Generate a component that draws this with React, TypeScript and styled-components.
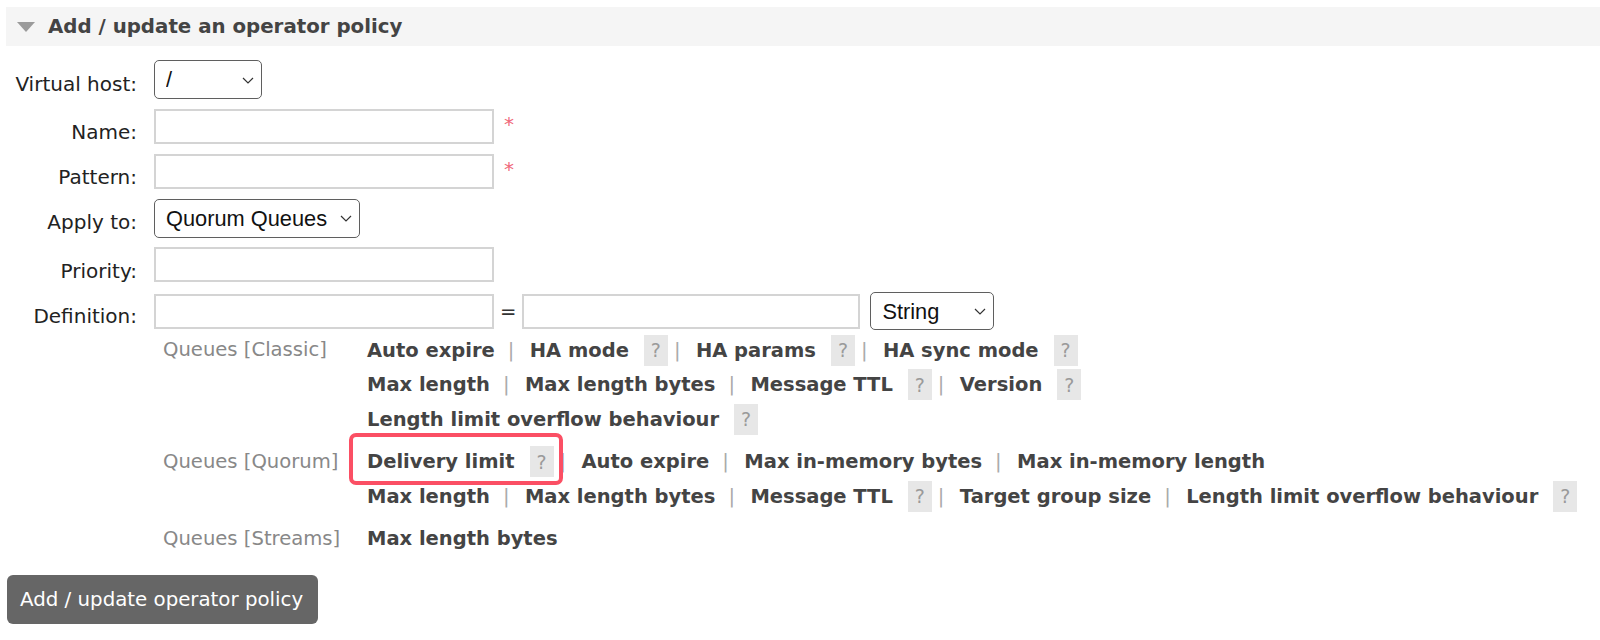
import React from 'react';
import styled, { createGlobalStyle } from 'styled-components';

const GlobalStyle = createGlobalStyle`
    body {
        margin: 0;
        background: #fff;
        font-family: 'DejaVu Sans', Verdana, sans-serif;
        font-size: 19.6px;
        color: #222;
    }
`;

const Page = styled.div`
    padding: 7px 0 0 6px;
`;

const SectionHeader = styled.div`
    display: flex;
    align-items: center;
    height: 39px;
    background: #f5f5f5;
`;

const Toggle = styled.svg`
    width: 18px;
    height: 10px;
    margin: 1px 13px 0 11px;
`;

const SectionTitle = styled.h2`
    margin: 0;
    font-size: 19.8px;
    font-weight: bold;
    color: #444;
`;

const Form = styled.div`
    display: grid;
    grid-template-columns: 131px 1fr;
    column-gap: 17px;
    row-gap: 9.5px;
    margin-top: 14px;
`;

const Label = styled.label`
    align-self: start;
    padding-top: 11.5px;
    line-height: 24px;
    font-size: 20px;
    text-align: right;
    white-space: nowrap;
`;

const Field = styled.div`
    display: flex;
    align-items: center;
`;

const FieldColumn = styled.div`
    display: flex;
    flex-direction: column;
`;

const TextInput = styled.input<{ $width?: number }>`
    box-sizing: border-box;
    width: ${({ $width }) => $width ?? 340}px;
    height: 35px;
    border: 2px solid #d4d4d4;
    border-radius: 0;
    padding: 0 6px;
    font: inherit;
    outline: none;
`;

const Required = styled.span`
    margin-left: 10px;
    margin-top: -4px;
    color: #f0687a;
    font-size: 20px;
`;

const Equals = styled.span`
    margin: 0 6px 0 6px;
    color: #333;
`;

const SelectWrap = styled.div<{ $width: number; $height?: number; $gap?: number }>`
    position: relative;
    width: ${({ $width }) => $width}px;
    height: ${({ $height }) => $height ?? 39}px;
    margin-left: ${({ $gap }) => $gap ?? 0}px;
`;

const NativeSelect = styled.select`
    appearance: none;
    box-sizing: border-box;
    width: 100%;
    height: 100%;
    padding: 0 0 0 11px;
    border: 1.5px solid #5f5f5f;
    border-radius: 5px;
    background: #fff;
    color: #111;
    font-family: 'Liberation Sans', Arial, sans-serif;
    font-size: 21.8px;
    outline: none;
`;

const Chevron = styled.svg`
    position: absolute;
    right: 8px;
    top: 50%;
    width: 12px;
    height: 7px;
    margin-top: -3px;
    pointer-events: none;
`;

const HelpBlock = styled.div`
    margin: 3px 0 0 9px;
    display: flex;
    flex-direction: column;
    gap: 8px;
`;

const HelpGroup = styled.div`
    display: grid;
    grid-template-columns: 194px 1fr;
    column-gap: 10px;
`;

const GroupName = styled.div`
    line-height: 34.5px;
    color: #888;
    white-space: nowrap;
`;

const GroupRows = styled.div`
    display: flex;
    flex-direction: column;
`;

const ArgRow = styled.div`
    display: flex;
    align-items: center;
    height: 34.5px;
    white-space: nowrap;
`;

const ArgLink = styled.span<{ $last: boolean }>`
    font-weight: bold;
    font-size: 19.5px;
    color: #444;
    padding-right: ${({ $last }) => ($last ? 0 : 13)}px;
`;

const HelpMark = styled.span<{ $last: boolean }>`
    display: inline-flex;
    align-items: center;
    justify-content: center;
    width: 24px;
    height: 31px;
    margin-left: 2px;
    margin-right: ${({ $last }) => ($last ? 0 : 6)}px;
    background: #e7e7e7;
    color: #9a9a9a;
    font-size: 19px;
`;

const Sep = styled.span`
    width: 6px;
    margin-right: 16px;
    text-align: center;
    color: #aaa;
`;

const Highlight = styled.span`
    position: relative;
    display: flex;
    align-items: center;
    align-self: stretch;

    &::after {
        content: '';
        position: absolute;
        left: -18px;
        right: -3px;
        top: -11.5px;
        bottom: -6px;
        border: 4px solid #fb4f64;
        border-radius: 7px;
        z-index: 1;
    }
`;

const SubmitButton = styled.button`
    margin: 19px 0 0 1px;
    height: 49px;
    padding: 0 15px 0 13px;
    border: none;
    border-radius: 6px;
    background: #666;
    color: #fff;
    font: inherit;
    font-size: 19.8px;
    cursor: pointer;
`;

type Arg = { name: string; help?: boolean; marked?: boolean };

const argGroups: { title: string; rows: Arg[][] }[] = [
    {
        title: 'Queues [Classic]',
        rows: [
            [
                { name: 'Auto expire' },
                { name: 'HA mode', help: true },
                { name: 'HA params', help: true },
                { name: 'HA sync mode', help: true },
            ],
            [
                { name: 'Max length' },
                { name: 'Max length bytes' },
                { name: 'Message TTL', help: true },
                { name: 'Version', help: true },
            ],
            [{ name: 'Length limit overflow behaviour', help: true }],
        ],
    },
    {
        title: 'Queues [Quorum]',
        rows: [
            [
                { name: 'Delivery limit', help: true, marked: true },
                { name: 'Auto expire' },
                { name: 'Max in-memory bytes' },
                { name: 'Max in-memory length' },
            ],
            [
                { name: 'Max length' },
                { name: 'Max length bytes' },
                { name: 'Message TTL', help: true },
                { name: 'Target group size' },
                { name: 'Length limit overflow behaviour', help: true },
            ],
        ],
    },
    {
        title: 'Queues [Streams]',
        rows: [[{ name: 'Max length bytes' }]],
    },
];

const Select = ({
    value,
    options,
    width,
    height,
    gap,
}: {
    value: string;
    options: string[];
    width: number;
    height?: number;
    gap?: number;
}) => (
    <SelectWrap $width={width} $height={height} $gap={gap}>
        <NativeSelect defaultValue={value}>
            {options.map(o => (
                <option key={o}>{o}</option>
            ))}
        </NativeSelect>
        <Chevron viewBox="0 0 12 7">
            <path d="M1 1 L6 6 L11 1" fill="none" stroke="#333" strokeWidth="1.2" />
        </Chevron>
    </SelectWrap>
);

const ArgItem = ({ arg, last }: { arg: Arg; last: boolean }) => {
    const body = (
        <>
            <ArgLink $last={last && !arg.help}>{arg.name}</ArgLink>
            {arg.help && <HelpMark $last={last}>?</HelpMark>}
        </>
    );
    return arg.marked ? <Highlight>{body}</Highlight> : body;
};

export default function App() {
    return (
        <Page>
            <GlobalStyle />
            <SectionHeader>
                <Toggle viewBox="0 0 18 10">
                    <polygon points="0,0 18,0 9,10" fill="#9b9b9b" />
                </Toggle>
                <SectionTitle>Add / update an operator policy</SectionTitle>
            </SectionHeader>

            <Form>
                <Label>Virtual host:</Label>
                <Field>
                    <Select value="/" options={['/']} width={108} />
                </Field>

                <Label>Name:</Label>
                <Field>
                    <TextInput type="text" />
                    <Required>*</Required>
                </Field>

                <Label>Pattern:</Label>
                <Field>
                    <TextInput type="text" />
                    <Required>*</Required>
                </Field>

                <Label>Apply to:</Label>
                <Field>
                    <Select
                        value="Quorum Queues"
                        options={['Queues and Exchanges', 'Classic Queues', 'Quorum Queues', 'Streams']}
                        width={206}
                    />
                </Field>

                <Label>Priority:</Label>
                <Field>
                    <TextInput type="text" />
                </Field>

                <Label>Definition:</Label>
                <FieldColumn>
                    <Field>
                        <TextInput type="text" />
                        <Equals>=</Equals>
                        <TextInput type="text" $width={338} />
                        <Select
                            value="String"
                            options={['String', 'Number', 'List']}
                            width={124}
                            height={38}
                            gap={10}
                        />
                    </Field>
                    <HelpBlock>
                        {argGroups.map(group => (
                            <HelpGroup key={group.title}>
                                <GroupName>{group.title}</GroupName>
                                <GroupRows>
                                    {group.rows.map((row, i) => (
                                        <ArgRow key={i}>
                                            {row.map((arg, j) => (
                                                <React.Fragment key={arg.name}>
                                                    <ArgItem arg={arg} last={j === row.length - 1} />
                                                    {j < row.length - 1 && <Sep>|</Sep>}
                                                </React.Fragment>
                                            ))}
                                        </ArgRow>
                                    ))}
                                </GroupRows>
                            </HelpGroup>
                        ))}
                    </HelpBlock>
                </FieldColumn>
            </Form>

            <SubmitButton>Add / update operator policy</SubmitButton>
        </Page>
    );
}
